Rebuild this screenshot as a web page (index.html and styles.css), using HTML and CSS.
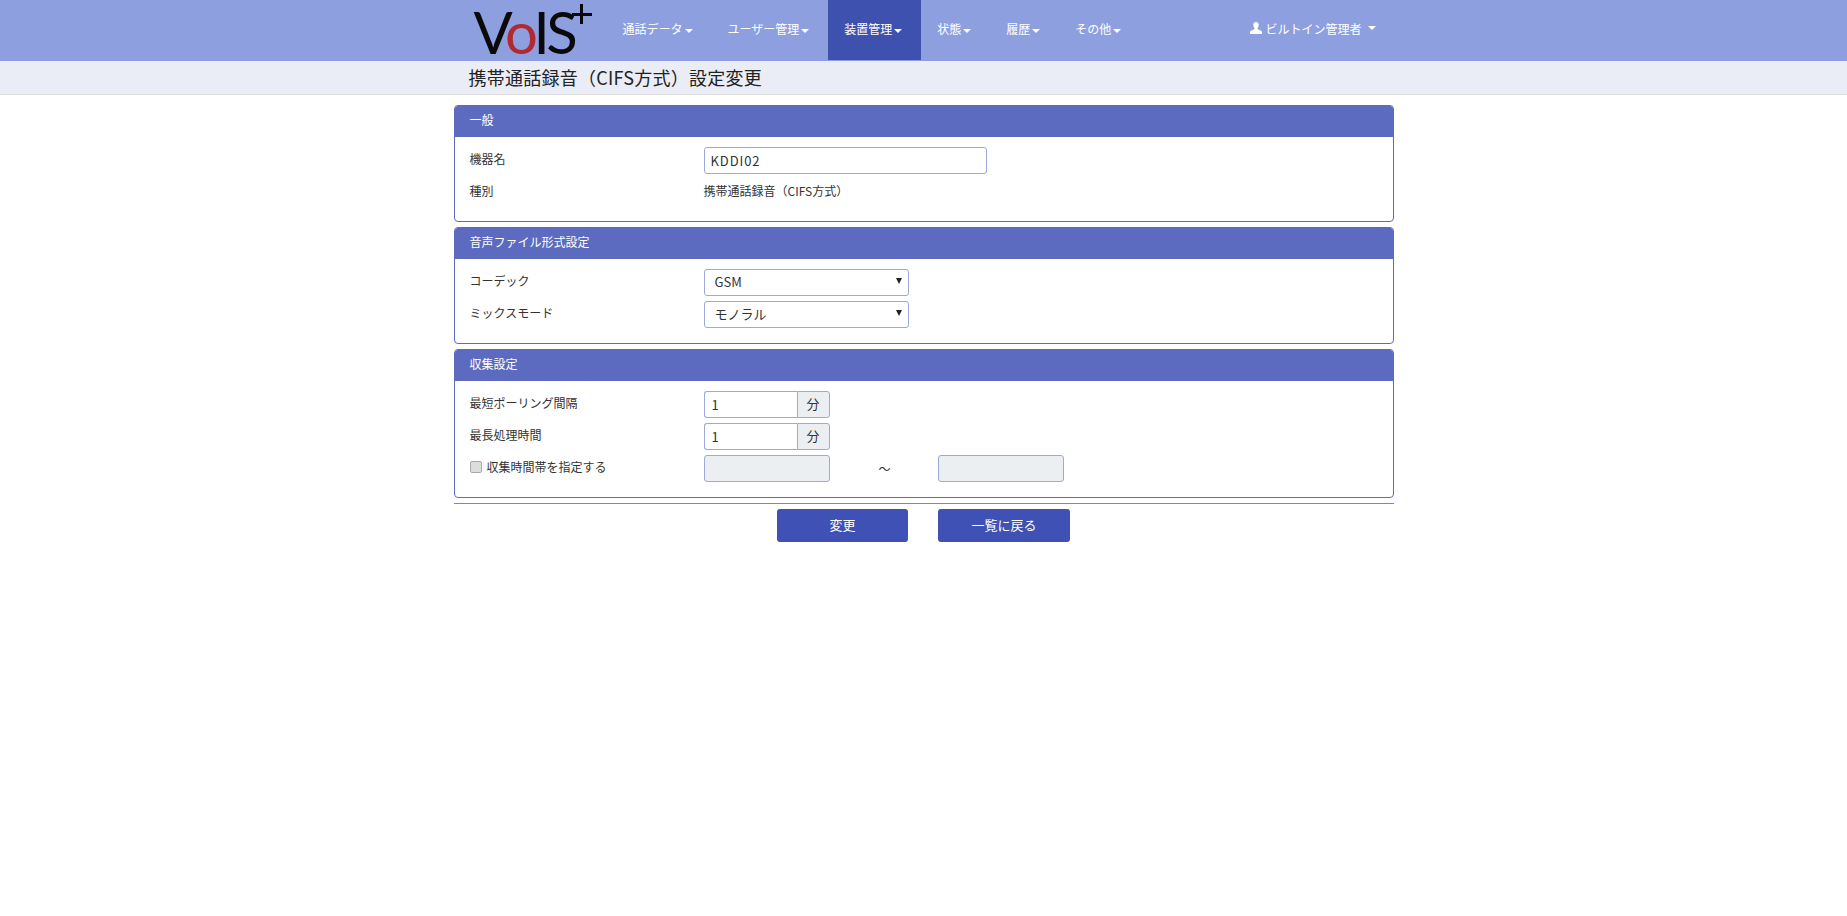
FILE: index.html
```html
<!DOCTYPE html>
<html lang="ja">
<head>
  <meta charset="UTF-8">
  <title>携帯通話録音（CIFS方式）設定変更</title>
  <link rel="stylesheet" href="styles.css">
</head>
<body>

<nav class="navbar">
  <div class="container navbar-inner">
    <a class="logo" href="#"><span class="logo-v">V</span><span class="logo-o">o</span><span class="logo-v">IS</span><span class="logo-plus"></span></a>
    <ul class="nav-menu">
      <li><a href="#">通話データ<span class="caret"></span></a></li>
      <li><a href="#">ユーザー管理<span class="caret"></span></a></li>
      <li class="active"><a href="#">装置管理<span class="caret"></span></a></li>
      <li><a href="#">状態<span class="caret"></span></a></li>
      <li><a href="#">履歴<span class="caret"></span></a></li>
      <li><a href="#">その他<span class="caret"></span></a></li>
    </ul>
    <a class="nav-user" href="#">
      <svg class="user-icon" viewBox="0 0 12 12" width="12" height="12"><path d="M6 0C4.300 0 3.300 1.300 3.300 3c0 1.300.5 2.400 1.200 3.100v1L1 8.700C.3 9 0 9.500 0 10.200V12h12v-1.800c0-.7-.3-1.200-1-1.500L7.500 7.100v-1C8.200 5.400 8.700 4.300 8.700 3 8.700 1.300 7.700 0 6 0z" fill="#fff"/></svg>
      ビルトイン管理者<span class="caret caret-user"></span>
    </a>
  </div>
</nav>

<div class="page-title">
  <div class="container">
    <h1>携帯通話録音（CIFS方式）設定変更</h1>
  </div>
</div>

<div class="container">
  <form class="content">
    <section class="panel">
      <div class="panel-heading">一般</div>
      <div class="panel-body">
        <div class="form-row">
          <label>機器名</label>
          <input class="input-name" type="text" value="KDDI02">
        </div>
        <div class="form-row">
          <label>種別</label>
          <span class="static-text">携帯通話録音（CIFS方式）</span>
        </div>
      </div>
    </section>

    <section class="panel">
      <div class="panel-heading">音声ファイル形式設定</div>
      <div class="panel-body">
        <div class="form-row">
          <label>コーデック</label>
          <div class="select-wrap">
            <select><option>GSM</option></select>
          </div>
        </div>
        <div class="form-row">
          <label>ミックスモード</label>
          <div class="select-wrap">
            <select><option>モノラル</option></select>
          </div>
        </div>
      </div>
    </section>

    <section class="panel">
      <div class="panel-heading">収集設定</div>
      <div class="panel-body">
        <div class="form-row">
          <label>最短ポーリング間隔</label>
          <div class="input-group">
            <input type="text" value="1">
            <span class="addon">分</span>
          </div>
        </div>
        <div class="form-row">
          <label>最長処理時間</label>
          <div class="input-group">
            <input type="text" value="1">
            <span class="addon">分</span>
          </div>
        </div>
        <div class="form-row">
          <label class="check-label"><input type="checkbox">収集時間帯を指定する</label>
          <input class="input-time" type="text" disabled>
          <span class="tilde">～</span>
          <input class="input-time" type="text" disabled>
        </div>
      </div>
    </section>

    <hr class="divider">

    <div class="actions">
      <button type="button">変更</button>
      <button class="btn-back" type="button">一覧に戻る</button>
    </div>
  </form>
</div>

</body>
</html>
```

FILE: styles.css
```css
* {
  box-sizing: border-box;
}
body {
  font-family: "Noto Sans CJK JP", sans-serif;
  font-size: 12px;
  color: #333;
  margin: 0;
  padding: 0;
  background-color: #fff;
}
a {
  text-decoration: none;
  color: inherit;
}
.container {
  width: 970px;
  margin: 0 auto;
  padding: 0 15px;
}

/* navbar */
.navbar {
  height: 61px;
  background-color: #8e9fe0;
}
.navbar-inner {
  display: flex;
  height: 60px;
}
.logo {
  width: 138px;
  padding-left: 20px;
  height: 60px;
  font-family: "Lato", sans-serif;
  font-weight: 400;
  font-size: 58px;
  letter-spacing: -3.5px;
  line-height: 64px;
  color: #0a0a0a;
  white-space: nowrap;
  position: relative;
}
.logo-o {
  color: #b02a30;
}
/* the plus of the logo, two bars */
.logo-plus {
  position: absolute;
  left: 118px;
  top: 4px;
  width: 20px;
  height: 20px;
  background:
    linear-gradient(#0a0a0a, #0a0a0a) center / 3px 100% no-repeat,
    linear-gradient(#0a0a0a, #0a0a0a) center / 100% 3px no-repeat;
}
.nav-menu {
  display: flex;
  list-style: none;
  margin: 0;
  padding: 0 0 0 15px;
}
.nav-menu a {
  display: block;
  height: 60px;
  padding: 0 19px 0 16px;
  line-height: 58px;
  color: #fff;
}
.nav-menu .active a {
  background-color: #3f51ae;
}
.caret {
  display: inline-block;
  margin-left: 2px;
  vertical-align: middle;
  border-top: 4px solid #fff;
  border-left: 4px solid transparent;
  border-right: 4px solid transparent;
}
.caret-user {
  margin-left: 6px;
}
.nav-user {
  margin-left: auto;
  margin-right: 18px;
  height: 60px;
  display: flex;
  align-items: center;
  color: #fff;
  padding-bottom: 4px;
}
.user-icon {
  margin-right: 3px;
}

/* title bar */
.page-title {
  height: 34px;
  background-color: #eaedf6;
  border-bottom: 1px solid #ddd;
}
.page-title h1 {
  margin: 0;
  padding-left: 15px;
  font-size: 18px;
  font-weight: 400;
  letter-spacing: .25px;
  line-height: 32px;
  color: #222;
}

/* panels */
.content {
  padding-top: 10px;
}
.panel {
  border: 1px solid #5c6bc0;
  border-radius: 4px;
  margin-bottom: 5px;
  overflow: hidden;
}
.panel-heading {
  height: 31px;
  padding-left: 15px;
  line-height: 28px;
  color: #fff;
  background-color: #5c6bc0;
}
.panel-body {
  padding: 10px 14px 15px 15px;
}
.form-row {
  display: flex;
  align-items: center;
  height: 27px;
  margin-bottom: 5px;
}
.form-row:last-child {
  margin-bottom: 0;
}
.form-row > label {
  width: 234px;
  flex: none;
  padding-bottom: 5px;
}
.static-text {
  padding-bottom: 5px;
}

/* inputs */
input[type="text"], select {
  font-family: inherit;
  font-size: 13px;
  color: #333;
  height: 27px;
  border: 1px solid #9fa8da;
  border-radius: 3px;
  background-color: #fff;
  outline: none;
}
input[type="text"] {
  padding: 0 6px;
}
.input-name {
  width: 283px;
  letter-spacing: .9px;
}
.select-wrap {
  width: 205px;
  position: relative;
}
.select-wrap select {
  width: 100%;
  padding: 0 10px 2px;
  appearance: none;
}
.select-wrap::after {
  content: "";
  position: absolute;
  right: 7px;
  top: 9px;
  border-top: 6px solid #222;
  border-left: 3px solid transparent;
  border-right: 3px solid transparent;
}
.input-group {
  display: flex;
  width: 126px;
}
.input-group input {
  width: 93px;
  padding-left: 7px;
  border-right: none;
  border-radius: 3px 0 0 3px;
}
.addon {
  flex: 1;
  text-align: center;
  font-size: 13px;
  line-height: 24px;
  background-color: #eceff1;
  border: 1px solid #9fa8da;
  border-radius: 0 3px 3px 0;
}
.input-time {
  width: 126px;
  background-color: #eceff1 !important;
}
.tilde {
  width: 108px;
  padding-left: 2px;
  text-align: center;
}
.check-label {
  display: flex;
  align-items: center;
}
.check-label input {
  appearance: none;
  width: 12px;
  height: 12px;
  margin: 1px 5px 0 0;
  border: 1px solid #aaa;
  border-radius: 2px;
  background-color: #ddd;
}

/* footer */
.divider {
  height: 1px;
  border: none;
  margin: 0 0 5px;
  background-color: #7986cb;
}
.actions {
  display: flex;
  justify-content: center;
  gap: 30px;
}
button {
  width: 131px;
  height: 33px;
  padding-bottom: 4px;
  font-family: inherit;
  font-size: 13px;
  color: #fff;
  background-color: #3f51b5;
  border: none;
  border-radius: 3px;
  cursor: pointer;
}
.btn-back {
  width: 132px;
}
```
